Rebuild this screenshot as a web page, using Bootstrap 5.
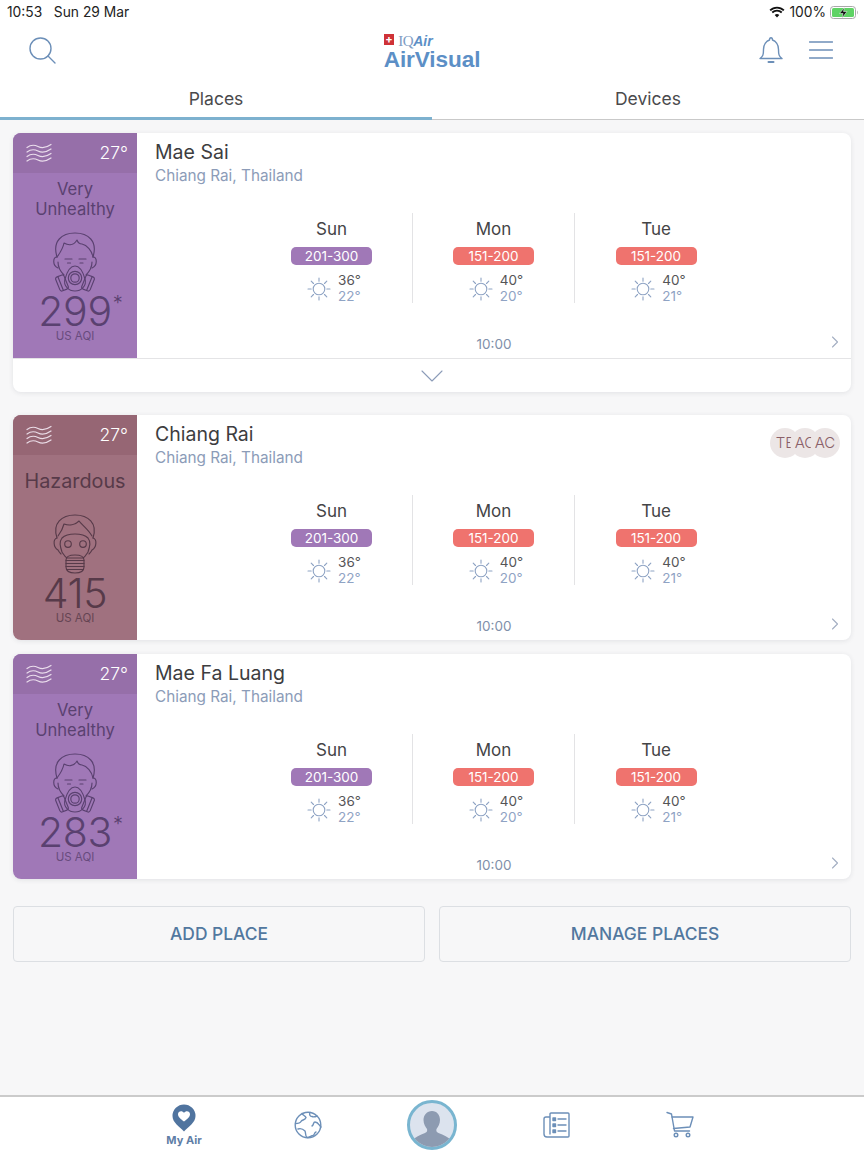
<!DOCTYPE html>
<html lang="en">
<head>
<meta charset="utf-8">
<title>AirVisual</title>
<link href="https://cdn.jsdelivr.net/npm/bootstrap@5.3.0/dist/css/bootstrap.min.css" rel="stylesheet">
<style>
html,body{height:100%}
body{font-family:Inter,"Open Sans","Liberation Sans",sans-serif;background:#f7f7f8;color:#3f3f41;width:864px;height:1152px;overflow:hidden}
.ic{fill:none;stroke:#6c8fb8;stroke-width:1.4;stroke-linecap:round;stroke-linejoin:round}
.top-area{background:#fff}
.status-row{height:22px;padding:2px 5px 0 7px;font-size:13.8px;color:#222}
.head-row{height:56px;padding:0 31px 0 29px;display:grid;grid-template-columns:1fr auto 1fr;align-items:center}
.logo-block{margin:-3px 0 0 2px}
.logo-flag{width:10.500px;height:10.500px;background:#cf3237;color:#fff;font-size:11px;font-weight:700;line-height:10px;text-align:center}
.logo-iq{font-family:"Liberation Serif",serif;font-size:15px;color:#7d9cc4;line-height:12px;letter-spacing:-.4px}
.logo-air{font-family:"Liberation Sans",sans-serif;font-style:italic;font-weight:700;font-size:14px;color:#5c8fc6;line-height:12px}
.logo-main{font-family:"Liberation Sans",sans-serif;font-weight:700;font-size:22.6px;line-height:21px;color:#5c8fc6;letter-spacing:-.1px;margin-top:-3px}
.head-tools{gap:26px}
.tab-cell{height:42px;font-size:17.5px;color:#4a4a4c;border-bottom:1px solid #c9c9c9;padding-top:1px}
.tab-on{border-bottom:3px solid #7db1cf;padding-top:3px}
.places{padding:13px 13px 0}
.pcard{border:0;border-radius:8px;overflow:hidden;background:#fff;box-shadow:0 1px 5px rgba(40,50,70,.1);margin-bottom:14px}
.pcard-gap{margin-bottom:23px}
.pcard-last{margin-bottom:27px}
.pside{width:124px;height:225px;flex:none;text-align:center}
.tone-p{background:#a078b7;color:#5a4170}
.tone-p .pband{background:#966fa9}
.tone-h{background:#a0717f;color:#573a49}
.tone-h .pband{background:#966674}
.pband{height:40px;padding:0 9px 0 13px;color:#fff;font-size:17.5px;font-weight:300}
.plabel{height:52px;margin-bottom:7px;font-size:16.6px;line-height:20px}
.plabel-big{font-size:19.8px}
.pface{display:block;margin:0 auto}
.pnum{font-size:41px;font-weight:300;line-height:34px;height:34px;margin-top:2px;letter-spacing:-.3px}
.pstar{position:absolute;left:100%;top:-3px;font-size:20px;line-height:24px;margin-left:1px;font-weight:300}
.punit{font-size:11.5px;line-height:12px;margin-top:2px;opacity:.8}
.pmain{min-width:0;height:225px}
.ptop{height:80px;padding:7px 11px 0 18px}
.pname{font-size:19.5px;line-height:24px;color:#3d3d3f;font-weight:400;margin:0}
.psub{font-size:15.3px;line-height:23px;color:#8c9cb8}
.fc-cell{width:162px;height:90px;padding-top:5px;text-align:center;border-right:1px solid #e3e3e5}
.fc-cell:last-child{border-right:0}
.fc-day{font-size:17px;line-height:22px;color:#444446}
.fc-badge{display:block;width:81px;height:18px;margin:7px auto 8px;padding:0;border-radius:5px;color:#fff;font-size:13.5px;font-weight:400;line-height:18px}
.b-p{background:#a078b7}
.b-r{background:#ef736e}
.fc-wx{padding-left:5px;gap:7px}
.fc-temp{font-size:13.5px;line-height:15.5px;text-align:left}
.fc-lo{color:#8fa3c4}
.fc-hi{color:#555557}
.pfoot{display:grid;grid-template-columns:1fr auto 1fr;align-items:center;margin-top:33px;padding:0 12px;font-size:13.5px;line-height:16px;color:#7f90aa}
.pfoot svg{justify-self:end;margin-top:-4px}
.expander{height:34px;border-top:1px solid #e4e4e6}
.chip{width:30px;height:30px;border-radius:50%;background:#ece6e6;color:#8a5f69;font-size:15px;font-weight:300;overflow:hidden;margin-left:-10px;flex:none}
.chip:first-child{margin-left:0}
.chip-set{margin-top:6px}
.act-row{gap:14px}
.act-btn{height:56px;flex:1 1 0;border:1px solid #dcdfe3;border-radius:4px;background:transparent;color:#52789f;font-size:17.4px;font-weight:500;padding:0}
.spacer-fill{min-height:0}
.tabbar{height:57px;background:#fff;border-top:2px solid #cbcbcb}
.tb-item{width:124px}
.tb-label{font-size:11px;font-weight:700;line-height:12px;color:#5f7ea6;margin-top:2px}
.avatar-ring{width:50px;height:50px;border-radius:50%;border:3px solid #79b5d0;background:#dce3ee;overflow:hidden}
</style>
</head>
<body class="d-flex flex-column">
<svg width="0" height="0" class="d-none">
<defs>
<symbol id="sun" viewBox="0 0 24 24"><g fill="none" stroke="#8ea3c4" stroke-width="1.1" stroke-linecap="round"><circle cx="12" cy="12" r="5.8"/><path d="M12 1v3.2M12 19.8V23M1 12h3.2M19.8 12H23M4.2 4.2l2.3 2.3M17.5 17.5l2.3 2.3M4.2 19.8l2.3-2.3M17.5 6.5l2.3-2.3"/></g></symbol>
<symbol id="wind" viewBox="0 0 26 20"><g fill="none" stroke="#f3e9f3" stroke-opacity=".9" stroke-width="1.2" stroke-linecap="round"><path d="M1 4.5C5 1.5 8 1.5 12 3.5S20 5 25 1.5"/><path d="M1 9C5 6 8 6 12 8s8 1.500 13-2"/><path d="M1 13.5c4-3 7-3 11-1s8 1.500 13-2"/><path d="M1 18c4-3 7-3 11-1s8 1.500 13-2"/></g></symbol>
<symbol id="half" viewBox="0 0 50 60"><g fill="none" stroke="currentColor" stroke-width="1.15" stroke-linecap="round" stroke-linejoin="round">
<path d="M7 25C2 9 12 1 25 1s23 8 18 24"/>
<path d="M7 25c-4 0-5 8 1 11M43 25c4 0 5 8-1 11"/>
<path d="M8 30c0 5 3 10 6 13M42 30c0 5-3 10-6 13"/>
<path d="M7 25c3-4 6-9 7-14 5 3 10 2 13-3 1 3 3 4 5 4 5 1 10 7 11 13"/>
<path d="M15 27h7M29 27h7M17.500 31h3M30 31h3"/>
<path d="M25 34c-5 0-8 6-10 13-2 7 4 12 10 12s12-5 10-12c-2-7-5-13-10-13z"/>
<circle cx="25" cy="46" r="6.700"/><circle cx="25" cy="46" r="4.200"/>
<g transform="rotate(-22 12 51)"><rect x="7.500" y="43.500" width="9" height="15" rx="2.200"/><path d="M10.500 44v14"/></g>
<g transform="rotate(22 38 51)"><rect x="33.500" y="43.500" width="9" height="15" rx="2.200"/><path d="M39.500 44v14"/></g>
</g></symbol>
<symbol id="full" viewBox="0 0 50 60"><g fill="none" stroke="currentColor" stroke-width="1.15" stroke-linecap="round" stroke-linejoin="round">
<path d="M7 24C2 9 12 1 25 1s23 8 18 23"/>
<path d="M7 24c-4 1-4 9 1 12 1 2 2 3 3 4M43 24c4 1 4 9-1 12-1 2-2 3-3 4"/>
<path d="M8 22c3-4 5-8 6-12 5 2 11 1 15-3 3 4 9 8 13 15"/>
<path d="M12 38c-2-6-3-10 0-14 3-3 8-4 13-4s10 1 13 4c3 4 2 8 0 14-2 3-3 5-5 6H17c-2-1-3-3-5-6z"/>
<circle cx="18" cy="30" r="3.300"/><circle cx="33" cy="30" r="3.300"/>
<path d="M16 46c0-3 3-5 9-5s9 2 9 5v7c0 4-4 6-9 6s-9-2-9-6z"/>
<path d="M16 46.500h18M16 49.500h18M16 52.500h18M17 55.500h16"/>
</g></symbol>
<symbol id="chev-r" viewBox="0 0 8 12"><path d="M1.500 1l5 5-5 5" fill="none" stroke="#a3aec2" stroke-width="1.1" stroke-linecap="round" stroke-linejoin="round"/></symbol>
</defs>
</svg>

<header class="top-area">
  <div class="status-row d-flex justify-content-between align-items-center">
    <span>10:53&nbsp;&nbsp;&nbsp;Sun 29 Mar</span>
    <span class="d-flex align-items-center gap-1">
      <svg width="16" height="12" viewBox="0 0 16 12"><path d="M8 11.500 5.700 9a3.300 3.300 0 0 1 4.600 0zM3.900 7.200a5.900 5.900 0 0 1 8.200 0l1.300-1.400a7.800 7.800 0 0 0-10.800 0zM.5 3.800a10.600 10.600 0 0 1 15 0L14.200 5.100a8.800 8.800 0 0 0-12.400 0z" fill="#111"/></svg>
      <span>100%</span>
      <svg width="29" height="13" viewBox="0 0 29 13"><rect x=".5" y=".5" width="25" height="12" rx="3" fill="none" stroke="#a9a9a9"/><rect x="2" y="2" width="22" height="9" rx="1.600" fill="#5fd365"/><path d="M14.500 1.500 9.500 7.500h3.500l-1 4.500 5-6.500h-3.500z" fill="#111" stroke="#fff" stroke-width=".5"/><path d="M27 4.500c1 .5 1 3.500 0 4z" fill="#a9a9a9"/></svg>
    </span>
  </div>
  <div class="head-row">
    <svg width="27" height="27" viewBox="0 0 27 27" class="ic"><circle cx="11.500" cy="11.500" r="10.500"/><path d="M19 19l7 7"/></svg>
    <div class="logo-block d-flex flex-column align-items-start">
      <div class="d-flex align-items-center gap-1"><span class="logo-flag">+</span><span><span class="logo-iq">IQ</span><span class="logo-air">Air</span></span></div>
      <div class="logo-main">AirVisual</div>
    </div>
    <div class="head-tools d-flex align-items-center justify-content-end">
      <svg width="24" height="28" viewBox="0 0 24 28" class="ic"><path d="M1 22.500c3-2 3.500-4 3.500-9 0-5 3-8.500 6-9.500 0-3 3-3 3 0 3 1 6 4.500 6 9.500s.5 7 3.500 9z"/><path d="M9.500 26h5" stroke-width="2"/></svg>
      <svg width="24" height="20" viewBox="0 0 24 20" class="ic"><path d="M.5 2h23M.5 10h23M.5 18h23"/></svg>
    </div>
  </div>
  <nav class="row g-0">
    <div class="col-6 tab-cell tab-on d-flex align-items-center justify-content-center">Places</div>
    <div class="col-6 tab-cell d-flex align-items-center justify-content-center">Devices</div>
  </nav>
</header>

<main class="places flex-grow-1 spacer-fill">

  <section class="card pcard pcard-gap">
    <div class="d-flex">
      <div class="pside tone-p">
        <div class="pband d-flex justify-content-between align-items-center"><svg width="26" height="20"><use href="#wind"/></svg><span>27°</span></div>
        <div class="plabel d-flex align-items-center justify-content-center"><span>Very<br>Unhealthy</span></div>
        <svg class="pface" width="50" height="60"><use href="#half"/></svg>
        <div class="pnum"><span class="position-relative d-inline-block">299<span class="pstar">*</span></span></div>
        <div class="punit">US AQI</div>
      </div>
      <div class="pmain flex-grow-1">
        <div class="ptop d-flex justify-content-between align-items-start">
          <div><h2 class="pname">Mae Sai</h2><div class="psub">Chiang Rai, Thailand</div></div>
        </div>
        <div class="d-flex justify-content-center">
          <div class="fc-cell"><div class="fc-day">Sun</div><span class="badge fc-badge b-p">201-300</span><div class="fc-wx d-flex justify-content-center align-items-center"><svg width="24" height="24"><use href="#sun"/></svg><div class="fc-temp"><div class="fc-hi">36°</div><div class="fc-lo">22°</div></div></div></div>
          <div class="fc-cell"><div class="fc-day">Mon</div><span class="badge fc-badge b-r">151-200</span><div class="fc-wx d-flex justify-content-center align-items-center"><svg width="24" height="24"><use href="#sun"/></svg><div class="fc-temp"><div class="fc-hi">40°</div><div class="fc-lo">20°</div></div></div></div>
          <div class="fc-cell"><div class="fc-day">Tue</div><span class="badge fc-badge b-r">151-200</span><div class="fc-wx d-flex justify-content-center align-items-center"><svg width="24" height="24"><use href="#sun"/></svg><div class="fc-temp"><div class="fc-hi">40°</div><div class="fc-lo">21°</div></div></div></div>
        </div>
        <div class="pfoot"><span></span><span>10:00</span><svg width="8" height="12"><use href="#chev-r"/></svg></div>
      </div>
    </div>
    <div class="expander d-flex align-items-center justify-content-center"><svg width="22" height="12" viewBox="0 0 22 12"><path d="M1 1l10 10L21 1" fill="none" stroke="#8c9cb8" stroke-width="1.100" stroke-linecap="round" stroke-linejoin="round"/></svg></div>
  </section>

  <section class="card pcard">
    <div class="d-flex">
      <div class="pside tone-h">
        <div class="pband d-flex justify-content-between align-items-center"><svg width="26" height="20"><use href="#wind"/></svg><span>27°</span></div>
        <div class="plabel plabel-big d-flex align-items-center justify-content-center">Hazardous</div>
        <svg class="pface" width="50" height="60"><use href="#full"/></svg>
        <div class="pnum">415</div>
        <div class="punit">US AQI</div>
      </div>
      <div class="pmain flex-grow-1">
        <div class="ptop d-flex justify-content-between align-items-start">
          <div><h2 class="pname">Chiang Rai</h2><div class="psub">Chiang Rai, Thailand</div></div>
          <div class="chip-set d-flex"><span class="chip d-flex align-items-center justify-content-center">TE</span><span class="chip d-flex align-items-center justify-content-center">AC</span><span class="chip d-flex align-items-center justify-content-center">AC</span></div>
        </div>
        <div class="d-flex justify-content-center">
          <div class="fc-cell"><div class="fc-day">Sun</div><span class="badge fc-badge b-p">201-300</span><div class="fc-wx d-flex justify-content-center align-items-center"><svg width="24" height="24"><use href="#sun"/></svg><div class="fc-temp"><div class="fc-hi">36°</div><div class="fc-lo">22°</div></div></div></div>
          <div class="fc-cell"><div class="fc-day">Mon</div><span class="badge fc-badge b-r">151-200</span><div class="fc-wx d-flex justify-content-center align-items-center"><svg width="24" height="24"><use href="#sun"/></svg><div class="fc-temp"><div class="fc-hi">40°</div><div class="fc-lo">20°</div></div></div></div>
          <div class="fc-cell"><div class="fc-day">Tue</div><span class="badge fc-badge b-r">151-200</span><div class="fc-wx d-flex justify-content-center align-items-center"><svg width="24" height="24"><use href="#sun"/></svg><div class="fc-temp"><div class="fc-hi">40°</div><div class="fc-lo">21°</div></div></div></div>
        </div>
        <div class="pfoot"><span></span><span>10:00</span><svg width="8" height="12"><use href="#chev-r"/></svg></div>
      </div>
    </div>
  </section>

  <section class="card pcard pcard-last">
    <div class="d-flex">
      <div class="pside tone-p">
        <div class="pband d-flex justify-content-between align-items-center"><svg width="26" height="20"><use href="#wind"/></svg><span>27°</span></div>
        <div class="plabel d-flex align-items-center justify-content-center"><span>Very<br>Unhealthy</span></div>
        <svg class="pface" width="50" height="60"><use href="#half"/></svg>
        <div class="pnum"><span class="position-relative d-inline-block">283<span class="pstar">*</span></span></div>
        <div class="punit">US AQI</div>
      </div>
      <div class="pmain flex-grow-1">
        <div class="ptop d-flex justify-content-between align-items-start">
          <div><h2 class="pname">Mae Fa Luang</h2><div class="psub">Chiang Rai, Thailand</div></div>
        </div>
        <div class="d-flex justify-content-center">
          <div class="fc-cell"><div class="fc-day">Sun</div><span class="badge fc-badge b-p">201-300</span><div class="fc-wx d-flex justify-content-center align-items-center"><svg width="24" height="24"><use href="#sun"/></svg><div class="fc-temp"><div class="fc-hi">36°</div><div class="fc-lo">22°</div></div></div></div>
          <div class="fc-cell"><div class="fc-day">Mon</div><span class="badge fc-badge b-r">151-200</span><div class="fc-wx d-flex justify-content-center align-items-center"><svg width="24" height="24"><use href="#sun"/></svg><div class="fc-temp"><div class="fc-hi">40°</div><div class="fc-lo">20°</div></div></div></div>
          <div class="fc-cell"><div class="fc-day">Tue</div><span class="badge fc-badge b-r">151-200</span><div class="fc-wx d-flex justify-content-center align-items-center"><svg width="24" height="24"><use href="#sun"/></svg><div class="fc-temp"><div class="fc-hi">40°</div><div class="fc-lo">21°</div></div></div></div>
        </div>
        <div class="pfoot"><span></span><span>10:00</span><svg width="8" height="12"><use href="#chev-r"/></svg></div>
      </div>
    </div>
  </section>

  <div class="act-row d-flex">
    <button type="button" class="btn act-btn">ADD PLACE</button>
    <button type="button" class="btn act-btn">MANAGE PLACES</button>
  </div>
</main>

<footer class="tabbar d-flex justify-content-center align-items-center">
  <div class="tb-item d-flex flex-column align-items-center">
    <svg width="26" height="28" viewBox="0 0 26 28"><path d="M13 27.500C8 22 1.500 18.500 1.500 12a11.500 11.500 0 0 1 23 0c0 6.500-6.500 10-11.500 15.500z" fill="#50749f"/><path d="M13 17.500c-3-2.500-6-4.500-6-7.300 0-3.400 4.300-4 6-1.400 1.700-2.600 6-2 6 1.400 0 2.800-3 4.800-6 7.300z" fill="#fff"/></svg>
    <span class="tb-label">My Air</span>
  </div>
  <div class="tb-item d-flex justify-content-center">
    <svg width="28" height="28" viewBox="0 0 28 28" class="ic"><circle cx="14" cy="14" r="12.800"/><path d="M8 2.500c1 2 3 2 4 4-1 3-4 2-5 4-1 2-4 2-5.500 2M16 1.500c-1 2 0 4 2 4 2 1 4 0 5-.5M27 16c-2-2-3-5-6-5-2 0-1 3-3 4M4 18c3-1 5 0 7 2 1 2 0 5 2 6.500 3 0 4-2 6-2 2-1 1-3 3-3.500"/></svg>
  </div>
  <div class="tb-item d-flex justify-content-center">
    <div class="avatar-ring"><svg width="44" height="44" viewBox="0 0 44 44" class="d-block"><path d="M22 8c5 0 8 4 8 9 0 4-2 7-3.500 9-.5 2 0 3 2 4 5 2 10 4 13 8v6H2v-6c3-4 8-6 13-8 2-1 2.500-2 2-4-1.500-2-3.500-5-3.500-9 0-5 3.500-9 8.500-9z" fill="#8d9bb1"/></svg></div>
  </div>
  <div class="tb-item d-flex justify-content-center">
    <svg width="27" height="26" viewBox="0 0 27 26" class="ic"><path d="M7 5V2a1 1 0 0 1 1-1h17a1 1 0 0 1 1 1v22a1 1 0 0 1-1 1H4a3 3 0 0 1-3-3V7a2 2 0 0 1 2-2h4v17"/><path d="M15 7h8M15 13h8M15 19h8"/><path d="M10 6h2.500v2.500H10zM10 12h2.500v2.500H10zM10 18h2.500v2.500H10z" fill="#6c8fb8"/></svg>
  </div>
  <div class="tb-item d-flex justify-content-center">
    <svg width="28" height="27" viewBox="0 0 28 27" class="ic"><path d="M1 1.500l4.500 1.500 3 17h15"/><path d="M6 6h21l-3 10-16.500 1.500"/><circle cx="10" cy="24" r="1.800"/><circle cx="22" cy="24" r="1.800"/></svg>
  </div>
</footer>
<script src="https://cdn.jsdelivr.net/npm/bootstrap@5.3.0/dist/js/bootstrap.bundle.min.js"></script>
</body>
</html>
